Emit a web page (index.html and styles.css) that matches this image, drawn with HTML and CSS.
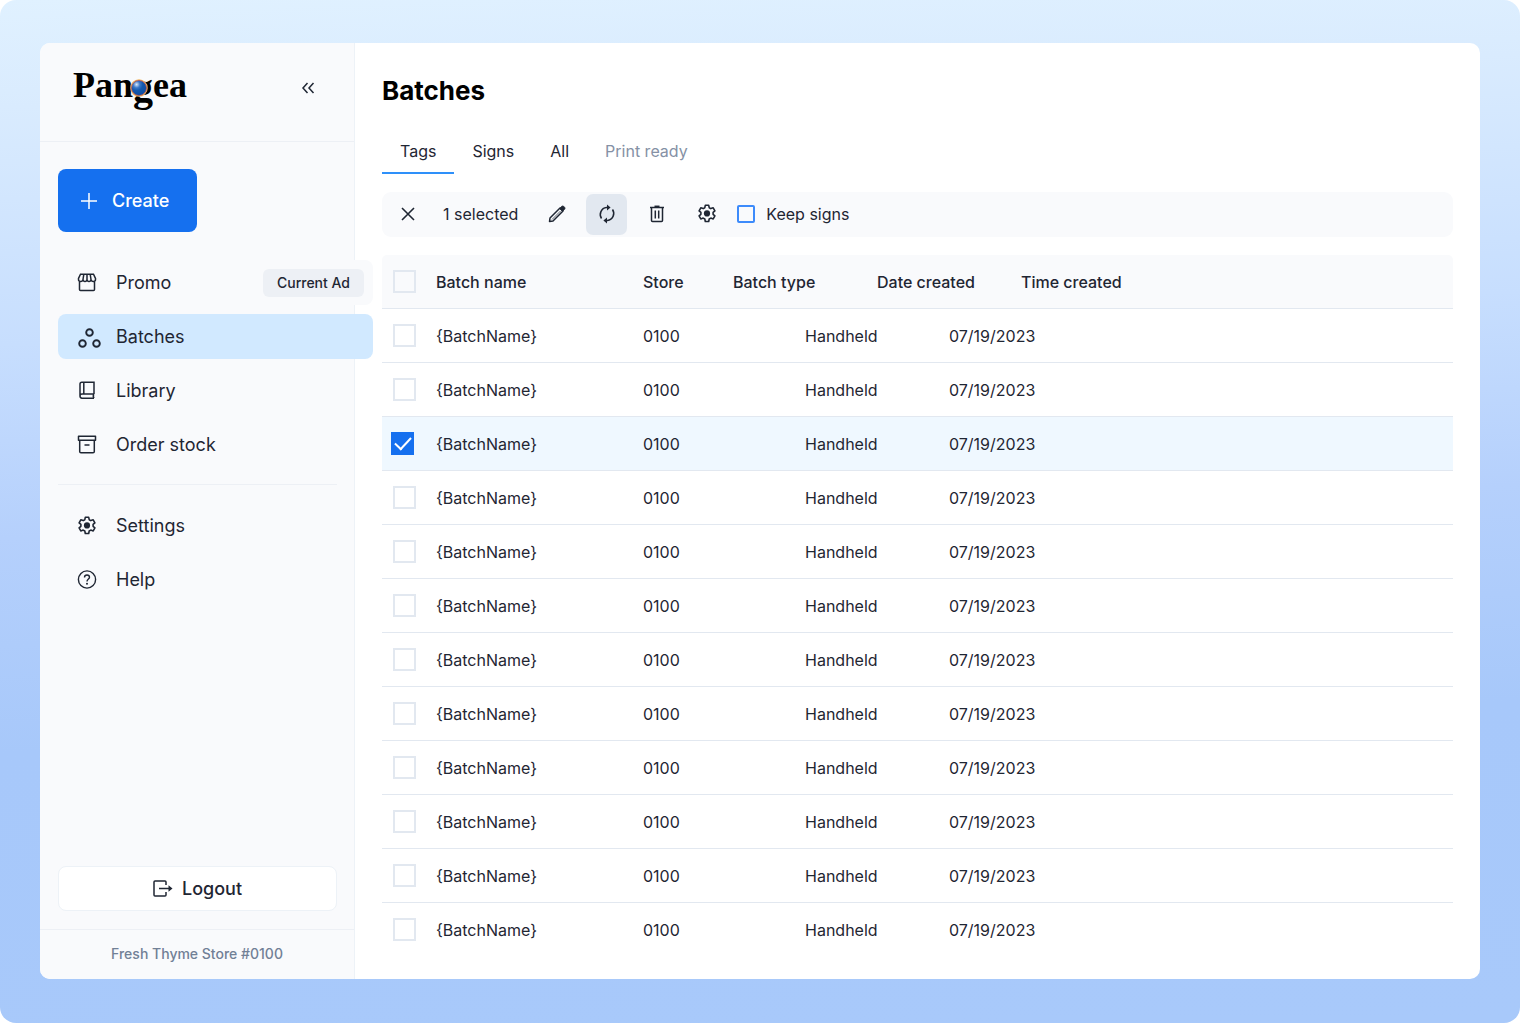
FILE: index.html
```html
<!DOCTYPE html>
<html lang="en">
<head>
<meta charset="utf-8">
<meta name="viewport" content="width=device-width, initial-scale=1">
<title>Batches – Pangea</title>
<link rel="stylesheet" href="styles.css">
</head>
<body>
<svg class="defs" width="0" height="0" aria-hidden="true">
  <symbol id="gear" viewBox="0 0 20 20">
    <path d="M8.300 1.300h3.400l.5 2.400 1.600.9 2.400-.8 1.700 3-1.800 1.600v1.900l1.800 1.600-1.700 3-2.400-.8-1.600.9-.5 2.500H8.300L7.800 15l-1.600-.9-2.400.8-1.700-3 1.800-1.600V8.400L2.100 6.800l1.700-3 2.400.8 1.600-.9z" fill="none" stroke="currentColor" stroke-width="1.600" stroke-linejoin="round"/>
    <circle cx="10" cy="9.400" r="3.100" fill="currentColor"/>
  </symbol>
</svg>
<div class="frame">
  <div class="card">
    <aside class="sidebar">
      <header class="brand">
        <svg class="logo" width="120" height="60" viewBox="0 0 120 60" role="img" aria-label="Pangea">
          <defs>
            <radialGradient id="ball" cx="35%" cy="28%" r="70%">
              <stop offset="0" stop-color="#dbe9fb"/><stop offset=".3" stop-color="#3a78c8"/><stop offset=".55" stop-color="#1358ae"/><stop offset="1" stop-color="#0d4ea3"/>
            </radialGradient>
          </defs>
          <text x="0" y="39" class="logo-text">Pan<tspan class="logo-g" dy="4">g</tspan><tspan dy="-4">ea</tspan></text>
          <circle cx="66" cy="30" r="8" fill="url(#ball)" stroke="#f2b45c" stroke-width="1.500"/>
          <circle cx="66" cy="30" r="7.500" fill="none" stroke="#8d3f6b" stroke-width=".7"/>
        </svg>
        <button class="icon-btn" type="button" aria-label="Collapse sidebar">
          <svg width="14" height="12" viewBox="0 0 14 12"><path d="M6.500 1 2 6l4.500 5M12.500 1 8 6l4.500 5" fill="none" stroke="currentColor" stroke-width="1.500"/></svg>
        </button>
      </header>
      <div class="side-body">
        <button class="create" type="button">
          <svg width="16" height="16" viewBox="0 0 16 16"><path d="M8 0v16M0 8h16" stroke="currentColor" stroke-width="1.500"/></svg>
          Create
        </button>
        <nav class="nav">
          <a class="nav-item filled" href="#promo">
            <svg class="nav-icon" viewBox="0 0 20 20"><g fill="none" stroke="currentColor" stroke-width="1.500"><path d="M2.500 8V16.500q0 1 1 1h13q1 0 1-1V8M3.500 1.300h13l2 4.200v1q0 2-2.100 2T14 6.500q-.2 2-2 2t-2-2q-.2 2-2 2T6 6.500q-.3 2-2.400 2T1.500 6.500V5.500zM6.800 1.300 6 6.500M10 1.300V6.500M13.200 1.300 14 6.500"/></g></svg>
            Promo<span class="tag">Current Ad</span>
          </a>
          <a class="nav-item active" href="#batches" aria-current="page">
            <svg class="nav-icon wide" viewBox="0 0 24 24"><g fill="none" stroke="currentColor" stroke-width="1.900"><circle cx="12.500" cy="7.500" r="3.300"/><circle cx="5.500" cy="18.500" r="3.300"/><circle cx="19.500" cy="18.500" r="3.300"/></g></svg>
            Batches
          </a>
          <a class="nav-item" href="#library">
            <svg class="nav-icon" viewBox="0 0 20 20"><path d="M17 13V1.200H4.800Q3 1.200 3 3v12.300M17 13H5q-2 0-2 2t2 2.200h12M17 13q-1.500 2 0 4.200M6.800 1.200V13" fill="none" stroke="currentColor" stroke-width="1.500"/></svg>
            Library
          </a>
          <a class="nav-item" href="#order">
            <svg class="nav-icon" viewBox="0 0 20 20"><path d="M1.500 1.200h17v4h-17zM2.700 5.200V16.500q0 1.300 1.300 1.300h12q1.300 0 1.300-1.300V5.200M7.500 10h5" fill="none" stroke="currentColor" stroke-width="1.500" stroke-linejoin="round"/></svg>
            Order stock
          </a>
          <hr class="rule">
          <a class="nav-item" href="#settings">
            <svg class="nav-icon"><use href="#gear"/></svg>
            Settings
          </a>
          <a class="nav-item" href="#help">
            <svg class="nav-icon" viewBox="0 0 20 20"><circle cx="10" cy="9.500" r="8.600" fill="none" stroke="currentColor" stroke-width="1.400"/><path d="M7.500 7.500q0-2.500 2.500-2.500T12.500 7.200C12.500 9 10 9 10 11.500" fill="none" stroke="currentColor" stroke-width="1.400"/><circle cx="10" cy="13.700" r="1" fill="currentColor"/></svg>
            Help
          </a>
        </nav>
        <button class="logout" type="button">
          <svg width="20" height="18" viewBox="0 0 20 18"><path d="M13 5V2q0-1-1-1H2Q1 1 1 2v13q0 1 1 1h10q1 0 1-1v-3M6 8.500h12" fill="none" stroke="currentColor" stroke-width="1.500"/><path d="M15.500 5.300 19.500 8.500l-4 3.200z" fill="currentColor"/></svg>
          Logout
        </button>
      </div>
      <footer class="store">Fresh Thyme Store #0100</footer>
    </aside>
    <main class="main">
      <h1 class="title">Batches</h1>
      <nav class="tabs" aria-label="Batch kinds">
        <a class="tab current" href="#tags" aria-current="page">Tags</a>
        <a class="tab" href="#signs">Signs</a>
        <a class="tab" href="#all">All</a>
        <a class="tab muted" href="#print">Print ready</a>
      </nav>
      <div class="toolbar">
        <button class="tool" type="button" aria-label="Clear selection"><svg width="14" height="14" viewBox="0 0 14 14"><path d="m1 1 12 12M13 1 1 13" stroke="currentColor" stroke-width="1.600"/></svg></button>
        <span class="count">1 selected</span>
        <button class="tool" type="button" aria-label="Edit"><svg width="18" height="18" viewBox="0 0 18 18"><path d="M1.500 16.500 2 13 12 3l3 3L5 16z" fill="none" stroke="currentColor" stroke-width="1.500" stroke-linejoin="round"/><path d="M11.500 3.500 13.700 1.300q1-.8 2 0l1 1q.8 1 0 2l-2.200 2.200zM4 14.500l8.500-8.500" fill="currentColor" stroke="currentColor" stroke-width=".7"/></svg></button>
        <button class="tool on" type="button" aria-label="Refresh"><svg width="18" height="20" viewBox="0 0 18 20"><path d="M3.500 14.500A7 7 0 0 1 8.500 3.600h2M14.500 5.500A7 7 0 0 1 9.500 16.400h-2" fill="none" stroke="currentColor" stroke-width="1.500"/><path d="m9 .5 3.600 3.100L9 6.600zM9 13.400l-3.600 3.100L9 19.500z" fill="currentColor"/></svg></button>
        <button class="tool" type="button" aria-label="Delete"><svg width="16" height="18" viewBox="0 0 16 18"><path d="M1 2.500h14M2.500 2.500v13q0 1 1 1h9q1 0 1-1v-13M6.300 5.500v8M9.700 5.500v8" fill="none" stroke="currentColor" stroke-width="1.500"/><path d="M5.500 1.300h5" stroke="currentColor" stroke-width="1.500"/></svg></button>
        <button class="tool" type="button" aria-label="Batch settings"><svg width="20" height="20"><use href="#gear"/></svg></button>
        <label class="keep"><input class="keep-box" type="checkbox">Keep signs</label>
      </div>
      <table class="batches">
        <colgroup><col class="c-check"><col class="c-name"><col class="c-store"><col class="c-type"><col class="c-date"><col></colgroup>
        <thead>
          <tr><th class="check"><input class="box" type="checkbox" aria-label="Select all"></th><th>Batch name</th><th>Store</th><th>Batch type</th><th>Date created</th><th>Time created</th></tr>
        </thead>
        <tbody>
          <tr><td class="check"><input class="box" type="checkbox" aria-label="Select batch 1"></td><td>{BatchName}</td><td>0100</td><td class="inset">Handheld</td><td class="inset">07/19/2023</td><td></td></tr>
          <tr><td class="check"><input class="box" type="checkbox" aria-label="Select batch 2"></td><td>{BatchName}</td><td>0100</td><td class="inset">Handheld</td><td class="inset">07/19/2023</td><td></td></tr>
          <tr class="selected"><td class="check"><input class="box" type="checkbox" checked aria-label="Select batch 3"></td><td>{BatchName}</td><td>0100</td><td class="inset">Handheld</td><td class="inset">07/19/2023</td><td></td></tr>
          <tr><td class="check"><input class="box" type="checkbox" aria-label="Select batch 4"></td><td>{BatchName}</td><td>0100</td><td class="inset">Handheld</td><td class="inset">07/19/2023</td><td></td></tr>
          <tr><td class="check"><input class="box" type="checkbox" aria-label="Select batch 5"></td><td>{BatchName}</td><td>0100</td><td class="inset">Handheld</td><td class="inset">07/19/2023</td><td></td></tr>
          <tr><td class="check"><input class="box" type="checkbox" aria-label="Select batch 6"></td><td>{BatchName}</td><td>0100</td><td class="inset">Handheld</td><td class="inset">07/19/2023</td><td></td></tr>
          <tr><td class="check"><input class="box" type="checkbox" aria-label="Select batch 7"></td><td>{BatchName}</td><td>0100</td><td class="inset">Handheld</td><td class="inset">07/19/2023</td><td></td></tr>
          <tr><td class="check"><input class="box" type="checkbox" aria-label="Select batch 8"></td><td>{BatchName}</td><td>0100</td><td class="inset">Handheld</td><td class="inset">07/19/2023</td><td></td></tr>
          <tr><td class="check"><input class="box" type="checkbox" aria-label="Select batch 9"></td><td>{BatchName}</td><td>0100</td><td class="inset">Handheld</td><td class="inset">07/19/2023</td><td></td></tr>
          <tr><td class="check"><input class="box" type="checkbox" aria-label="Select batch 10"></td><td>{BatchName}</td><td>0100</td><td class="inset">Handheld</td><td class="inset">07/19/2023</td><td></td></tr>
          <tr><td class="check"><input class="box" type="checkbox" aria-label="Select batch 11"></td><td>{BatchName}</td><td>0100</td><td class="inset">Handheld</td><td class="inset">07/19/2023</td><td></td></tr>
          <tr><td class="check"><input class="box" type="checkbox" aria-label="Select batch 12"></td><td>{BatchName}</td><td>0100</td><td class="inset">Handheld</td><td class="inset">07/19/2023</td><td></td></tr>
        </tbody>
      </table>
    </main>
  </div>
</div>
</body>
</html>
```
FILE: styles.css
```css
* { box-sizing: border-box; }

body {
  margin: 0;
  background: #fff;
  color: #1f2633;
  font: 16px/24px Inter, "Liberation Sans", sans-serif;
}

button {
  font: inherit;
  color: inherit;
  border: 0;
  background: none;
  padding: 0;
  cursor: pointer;
}

a { color: inherit; text-decoration: none; }
svg { display: block; flex: none; }
.defs { position: absolute; }

.frame {
  display: flex;
  min-height: 100vh;
  padding: 43px 40px 44px;
  border-radius: 16px;
  background: linear-gradient(178deg, #e0f1ff 0%, #d9ebfe 10%, #c7defe 32%, #b5d0fc 50%, #a7c8fa 70%, #a8c9fa 100%);
}

.card {
  flex: 1;
  display: flex;
  min-width: 0;
  border-radius: 10px;
  background: #fff;
}

/* Sidebar */
.sidebar {
  display: flex;
  flex-direction: column;
  flex: none;
  width: 315px;
  border-right: 1px solid #edf2f7;
  border-radius: 10px 0 0 10px;
  background: #f9fafc;
}

.brand {
  display: flex;
  align-items: center;
  justify-content: space-between;
  height: 99px;
  padding: 0 32px 8px 33px;
  border-bottom: 1px solid #edf0f5;
}

.logo-text {
  font: bold 36px "Liberation Serif", serif;
  fill: #000;
}

.logo-g { font-size: 40px; }

.icon-btn {
  display: grid;
  place-items: center;
  width: 28px;
  height: 28px;
}

.side-body {
  flex: 1;
  display: flex;
  flex-direction: column;
  padding: 27px 17px 18px 18px;
}

.create {
  display: flex;
  align-items: center;
  align-self: flex-start;
  gap: 15px;
  height: 63px;
  padding: 0 28px 0 23px;
  border-radius: 8px;
  background: #1570ef;
  color: #fff;
  font-size: 18px;
  font-weight: 500;
}

.nav {
  display: flex;
  flex-direction: column;
  gap: 9px;
  margin: 28px -36px 0 0;
}

.nav-item {
  display: flex;
  align-items: center;
  height: 45px;
  padding: 0 9px 0 19px;
  border-radius: 8px;
  font-size: 18px;
}

.nav-item.filled { background: #f9fafc; }
.nav-item.active { background: #d1e9ff; }

.nav-icon {
  width: 20px;
  height: 20px;
  margin-right: 19px;
}

.nav-icon.wide {
  width: 24px;
  height: 24px;
  margin-right: 15px;
}

.tag {
  margin-left: auto;
  padding: 2px 14px;
  border-radius: 6px;
  background: #edf0f5;
  font-size: 14px;
  font-weight: 500;
}

.rule {
  width: 279px;
  height: 1px;
  margin: 8px 0 9px;
  border: 0;
  background: #edf0f5;
}

.logout {
  display: flex;
  align-items: center;
  justify-content: center;
  gap: 9px;
  height: 45px;
  margin-top: auto;
  border: 1px solid #edf2f7;
  border-radius: 8px;
  background: #fff;
  font-size: 18px;
  font-weight: 500;
}

.store {
  padding: 12px 0 13px;
  border-top: 1px solid #edf0f5;
  color: #718096;
  font-size: 14px;
  font-weight: 500;
  text-align: center;
}

/* Main column */
.main {
  flex: 1;
  min-width: 0;
  padding: 30px 27px 22px;
}

.title {
  margin: 0;
  color: #000;
  font-size: 26px;
  font-weight: 700;
  line-height: 36px;
}

.tabs { display: flex; margin-top: 20px; }

.tab {
  padding: 10px 18px 9px;
  border-bottom: 2px solid transparent;
}

.tab.current { border-color: #2e90fa; }
.tab.muted { color: #8591a5; }

.toolbar {
  display: flex;
  align-items: center;
  height: 45px;
  margin-top: 18px;
  padding: 0 5px 1px;
  border-radius: 9px;
  background: #f9fafc;
}

.tool {
  display: grid;
  place-items: center;
  width: 41px;
  height: 41px;
  margin-right: 9px;
  border-radius: 7px;
}

.tool.on { background: #e2e8f0; }
.count { margin: 0 18px 0 6px; }

.keep {
  display: flex;
  align-items: center;
  gap: 11px;
  margin-left: 1px;
}

.keep-box {
  appearance: none;
  width: 18px;
  height: 18px;
  margin: 0;
  border: 2px solid #3d8bfb;
  border-radius: 2px;
}

.batches {
  width: 100%;
  margin-top: 18px;
  border-spacing: 0;
  table-layout: fixed;
}

.c-check { width: 54px; }
.c-name { width: 207px; }
.c-store { width: 90px; }
.c-type, .c-date { width: 144px; }

th, td {
  height: 54px;
  padding: 0;
  border-bottom: 1px solid #e2e8f0;
  text-align: left;
  white-space: nowrap;
}

th { background: #f9fafc; font-weight: 500; }
th:first-child { border-top-left-radius: 5px; }
th:last-child { border-top-right-radius: 5px; }
tbody tr:last-child td { border-bottom-color: transparent; }
.check { padding-left: 11px; }
.inset { padding-left: 72px; }
.selected td { background: #eff8ff; }
.selected .check { padding-left: 9px; }

.box {
  appearance: none;
  display: block;
  width: 23px;
  height: 23px;
  margin: 0;
  border: 2px solid #e2e8f0;
}

.box:checked {
  display: grid;
  place-items: center;
  border: 0;
  background: #1570ef;
}

.box:checked::before {
  content: "";
  width: 14px;
  height: 7px;
  border: solid #fff;
  border-width: 0 0 2px 2px;
  transform: translateY(-2px) rotate(-47deg);
}
```
